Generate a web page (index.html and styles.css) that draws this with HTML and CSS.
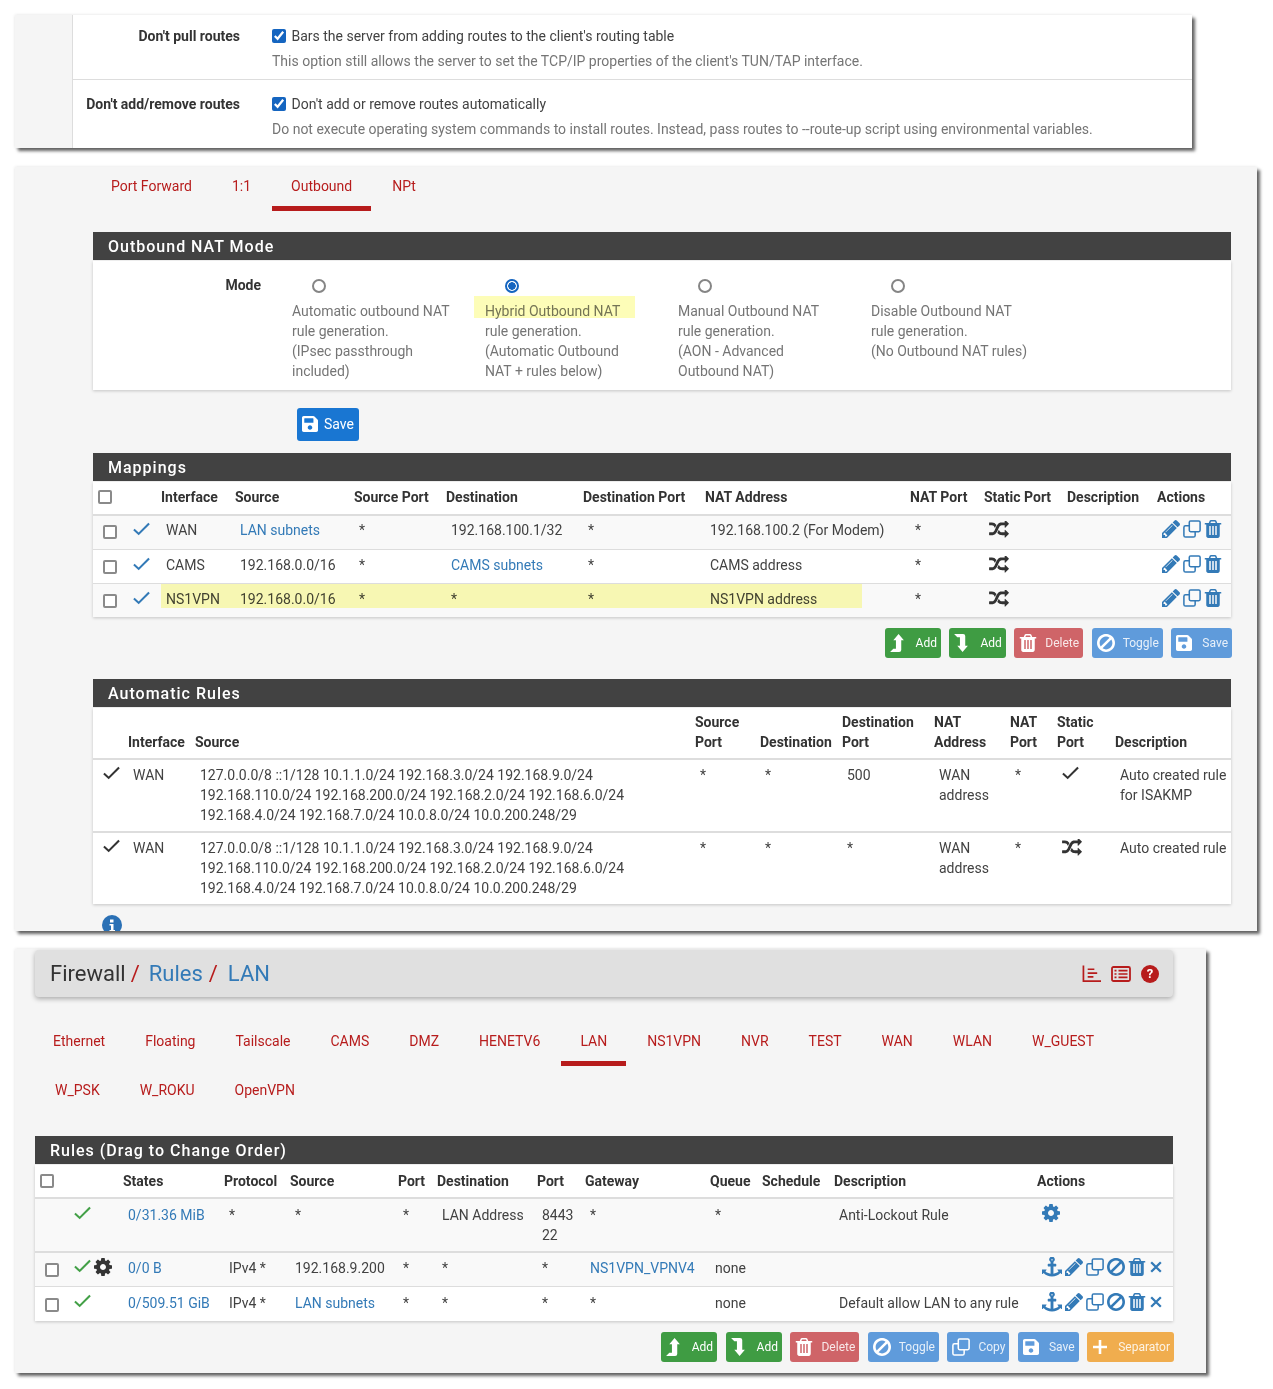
FILE: index.html

```html
<!DOCTYPE html>
<html lang="en">
<head>
    <meta charset="UTF-8">
    <title>pfSense settings</title>
    <link rel="stylesheet" href="styles.css">
</head>
<body>

<!-- Icon sprite -->
<svg class="sprite" xmlns="http://www.w3.org/2000/svg">
    <symbol id="i-random" viewBox="0 128 1792 1536"><path d="M666 481q-60 92-137 273-22-45-37-72.5t-40.5-63.5-51-56.5-63-35-81.5-14.5h-224q-14 0-23-9t-9-23v-192q0-14 9-23t23-9h224q250 0 410 225zm1126 799q0 14-9 23l-320 320q-9 9-23 9-13 0-22.5-9.5t-9.5-22.5v-192q-32 0-85 .5t-81 1-73-1-71-5-64-10.5-63-18.5-58-28.5-59-40-55-53.5-56-69.5q59-93 136-273 22 45 37 72.5t40.5 63.5 51 56.5 63 35 81.5 14.5h256v-192q0-14 9-23t23-9q12 0 24 10l319 319q9 9 9 23zm0-896q0 14-9 23l-320 320q-9 9-23 9-13 0-22.5-9.5t-9.5-22.5v-192h-256q-48 0-87 15t-69 45-51 61.5-45 77.5q-32 62-78 171-29 66-49.5 111t-54 105-64 100-74 83-90 68.5-106.5 42-128 16.5h-224q-14 0-23-9t-9-23v-192q0-14 9-23t23-9h224q48 0 87-15t69-45 51-61.5 45-77.5q32-62 78-171 29-66 49.5-111t54-105 64-100 74-83 90-68.5 106.5-42 128-16.5h256v-192q0-14 9-23t23-9q12 0 24 10l319 319q9 9 9 23z"/></symbol>
    <symbol id="i-pencil" viewBox="128 149 1515 1515"><path d="M491 1536l91-91-235-235-91 91v107h128v128h107zm523-928q0-22-22-22-10 0-17 7l-542 542q-7 7-7 17 0 22 22 22 10 0 17-7l542-542q7-7 7-17zm-54-192l416 416-832 832h-416v-416zm683 96q0 53-37 90l-166 166-416-416 166-165q36-38 90-38 53 0 91 38l235 234q37 39 37 91z"/></symbol>
    <symbol id="i-clone" viewBox="0 0 20 20"><rect x="7" y="1" width="12" height="12" rx="1.5" fill="none" stroke="currentColor" stroke-width="1.7"/><path d="M7 6.5H2.8A1.8 1.8 0 0 0 1 8.3v8.9A1.8 1.8 0 0 0 2.8 19h8.9a1.8 1.8 0 0 0 1.8-1.8V13" fill="none" stroke="currentColor" stroke-width="1.7"/></symbol>
    <symbol id="i-trash" viewBox="192 128 1408 1536"><path d="M704 1376v-704q0-14-9-23t-23-9h-64q-14 0-23 9t-9 23v704q0 14 9 23t23 9h64q14 0 23-9t9-23zm256 0v-704q0-14-9-23t-23-9h-64q-14 0-23 9t-9 23v704q0 14 9 23t23 9h64q14 0 23-9t9-23zm256 0v-704q0-14-9-23t-23-9h-64q-14 0-23 9t-9 23v704q0 14 9 23t23 9h64q14 0 23-9t9-23zm-544-992h448l-48-117q-7-9-17-11h-317q-10 2-17 11zm928 32v64q0 14-9 23t-23 9h-96v948q0 83-47 143.5t-113 60.5h-832q-66 0-113-58.5t-47-141.5v-952h-96q-14 0-23-9t-9-23v-64q0-14 9-23t23-9h309l70-167q15-37 54-63t79-26h320q40 0 79 26t54 63l70 167h309q14 0 23 9t9 23z"/></symbol>
    <symbol id="i-ban" viewBox="128 128 1536 1536"><path d="M1440 893q0-161-87-295l-754 753q137 89 297 89 111 0 211.5-43.5t173.5-116.5 116-174.5 43-212.5zm-999 299l755-754q-135-91-300-91-148 0-273 73t-198 199-73 274q0 162 89 299zm1223-299q0 157-61 300t-163.5 246-245 164-298.5 61-298.5-61-245-164-163.5-246-61-300 61-299.5 163.5-245.5 245-164 298.5-61 298.5 61 245 164 163.5 245.5 61 299.5z"/></symbol>
    <symbol id="i-times" viewBox="0 0 16 16"><path d="M2.5 2.5l11 11M13.5 2.5l-11 11" fill="none" stroke="currentColor" stroke-width="2.6"/></symbol>
    <symbol id="i-cog" viewBox="128 128 1536 1536"><path d="M1152 896q0-106-75-181t-181-75-181 75-75 181 75 181 181 75 181-75 75-181zm512-109v222q0 12-8 23t-20 13l-185 28q-19 54-39 91 35 50 107 138 10 12 10 25t-9 23q-27 37-99 108t-94 71q-12 0-26-9l-138-108q-44 23-91 38-16 136-29 186-7 28-36 28h-222q-14 0-24.5-8.5t-11.5-21.5l-28-184q-49-16-90-37l-141 107q-10 9-25 9-14 0-25-11-126-114-165-168-7-10-7-23 0-12 8-23 15-21 51-66.5t54-70.5q-27-50-41-99l-183-27q-13-2-21-12.5t-8-23.5v-222q0-12 8-23t19-13l186-28q14-46 39-92-40-57-107-138-10-12-10-24 0-10 9-23 26-36 98.5-107.5t94.5-71.5q13 0 26 10l138 107q44-23 91-38 16-136 29-186 7-28 36-28h222q14 0 24.5 8.5t11.5 21.5l28 184q49 16 90 37l142-107q9-9 24-9 13 0 25 10 129 119 165 170 7 8 7 22 0 12-8 23-15 21-51 66.5t-54 70.5q26 50 41 98l183 28q13 2 21 12.5t8 23.5z"/></symbol>
    <symbol id="i-anchor" viewBox="0 0 1792 1792"><path d="M960 256q0-26-19-45t-45-19-45 19-19 45 19 45 45 19 45-19 19-45zm832 888v352q0 22-20 30-8 2-12 2-12 0-23-9l-93-93q-119 143-318.5 226.5t-429.5 83.5-429.5-83.5-318.5-226.5l-93 93q-9 9-23 9-4 0-12-2-20-8-20-30v-352q0-14 9-23t23-9h352q22 0 30 20 8 19-7 35l-100 100q67 91 189.5 153.5t271.5 82.5v-647h-192q-26 0-45-19t-19-45v-128q0-26 19-45t45-19h192v-163q-58-34-93-92.5t-35-128.5q0-106 75-181t181-75 181 75 75 181q0 70-35 128.5t-93 92.5v163h192q26 0 45 19t19 45v128q0 26-19 45t-45 19h-192v647q149-20 271.5-82.5t189.5-153.5l-100-100q-15-16-7-35 8-20 30-20h352q14 0 23 9t9 23z"/></symbol>
    <symbol id="i-save" viewBox="0 32 448 448"><path d="M433.941 129.941l-83.882-83.882A48 48 0 0 0 316.118 32H48C21.49 32 0 53.49 0 80v352c0 26.51 21.49 48 48 48h352c26.51 0 48-21.49 48-48V163.882a48 48 0 0 0-14.059-33.941zM224 416c-35.346 0-64-28.654-64-64 0-35.346 28.654-64 64-64s64 28.654 64 64c0 35.346-28.654 64-64 64zm96-304.52V212c0 6.627-5.373 12-12 12H76c-6.627 0-12-5.373-12-12V108c0-6.627 5.373-12 12-12h228.52c3.183 0 6.235 1.264 8.485 3.515l3.48 3.48A11.996 11.996 0 0 1 320 111.48z"/></symbol>
    <symbol id="i-up" viewBox="0 0 13 17"><path d="M8 0l5 6h-2.500v9a2 2 0 0 1-2 2H0l3-3h2.500V6H3z"/></symbol>
    <symbol id="i-down" viewBox="0 0 13 17"><path d="M0 0h8.500a2 2 0 0 1 2 2v9H13l-5 6-5-6h2.500V3H3z"/></symbol>
    <symbol id="i-plus" viewBox="0 0 16 16"><path d="M8 1v14M1 8h14" fill="none" stroke="currentColor" stroke-width="2.6"/></symbol>
    <symbol id="i-check" viewBox="0 0 18 14"><path d="M1 7.5L6 12.2 17 1.2" fill="none" stroke="currentColor" stroke-width="2.2"/></symbol>
    <symbol id="i-chart" viewBox="0 0 20 18"><path d="M1.500 0v16.500H20M6 4h7M6 8h10M6 12h6" fill="none" stroke="currentColor" stroke-width="1.8"/></symbol>
    <symbol id="i-list" viewBox="0 0 20 16"><rect x="1" y="1" width="18" height="14" rx="1.5" fill="none" stroke="currentColor" stroke-width="1.8"/><path d="M3.500 4.700h2M7.500 4.700h9M3.500 8h2M7.500 8h9M3.500 11.300h2M7.500 11.300h9" fill="none" stroke="currentColor" stroke-width="1.7"/></symbol>
    <symbol id="i-info" viewBox="0 0 20 20"><circle cx="10" cy="10" r="10"/><path d="M8 4.500h3.500v3H8zM7.500 9h4v6H13v1.500H7.500V15H9v-4.500H7.500z" fill="#ffffff"/></symbol>
</svg>

<div class="page">

    <!-- OpenVPN options -->
    <section class="shot shot-options">
        <div class="form-row">
            <div class="form-label">Don't pull routes</div>
            <div class="form-value">
                <label class="check-line"><input type="checkbox" checked> Bars the server from adding routes to the client's routing table</label>
                <div class="hint">This option still allows the server to set the TCP/IP properties of the client's TUN/TAP interface.</div>
            </div>
        </div>
        <div class="form-row form-row-last">
            <div class="form-label">Don't add/remove routes</div>
            <div class="form-value">
                <label class="check-line"><input type="checkbox" checked> Don't add or remove routes automatically</label>
                <div class="hint">Do not execute operating system commands to install routes. Instead, pass routes to --route-up script using environmental variables.</div>
            </div>
        </div>
    </section>

    <!-- Outbound NAT -->
    <section class="shot shot-nat">
        <nav class="tabs tabs-nat">
            <a class="tab">Port Forward</a>
            <a class="tab">1:1</a>
            <a class="tab active">Outbound</a>
            <a class="tab">NPt</a>
        </nav>

        <h2 class="panel-title title-mode">Outbound NAT Mode</h2>
        <div class="panel-body mode-body">
            <div class="mode-label">Mode</div>
            <div class="mode-opt">
                <input type="radio" name="mode">
                <p>Automatic outbound NAT<br>rule generation.<br>(IPsec passthrough<br>included)</p>
            </div>
            <div class="mode-opt">
                <span class="marker marker-hybrid"></span>
                <input type="radio" name="mode" checked>
                <p>Hybrid Outbound NAT<br>rule generation.<br>(Automatic Outbound<br>NAT + rules below)</p>
            </div>
            <div class="mode-opt">
                <input type="radio" name="mode">
                <p>Manual Outbound NAT<br>rule generation.<br>(AON - Advanced<br>Outbound NAT)</p>
            </div>
            <div class="mode-opt">
                <input type="radio" name="mode">
                <p>Disable Outbound NAT<br>rule generation.<br>(No Outbound NAT rules)</p>
            </div>
        </div>
        <button class="btn-save"><svg class="ico"><use href="#i-save"/></svg>Save</button>

        <h2 class="panel-title">Mappings</h2>
        <div class="panel-body table-wrap">
            <span class="marker marker-row"></span>
            <table class="grid striped map-table">
                <colgroup><col><col><col><col><col><col><col><col><col><col><col><col></colgroup>
                <thead>
                    <tr>
                        <th><input type="checkbox"></th><th></th><th>Interface</th><th>Source</th><th>Source Port</th><th>Destination</th><th>Destination Port</th><th>NAT Address</th><th>NAT Port</th><th>Static Port</th><th>Description</th><th>Actions</th>
                    </tr>
                </thead>
                <tbody>
                    <tr>
                        <td><input type="checkbox"></td>
                        <td class="tick"><svg class="ico-check blue"><use href="#i-check"/></svg></td>
                        <td>WAN</td><td><a class="link">LAN subnets</a></td><td>*</td><td>192.168.100.1/32</td><td>*</td><td>192.168.100.2 (For Modem)</td><td>*</td>
                        <td><svg class="ico-random"><use href="#i-random"/></svg></td><td></td>
                        <td><div class="actions"><svg><use href="#i-pencil"/></svg><svg><use href="#i-clone"/></svg><svg><use href="#i-trash"/></svg></div></td>
                    </tr>
                    <tr>
                        <td><input type="checkbox"></td>
                        <td class="tick"><svg class="ico-check blue"><use href="#i-check"/></svg></td>
                        <td>CAMS</td><td>192.168.0.0/16</td><td>*</td><td><a class="link">CAMS subnets</a></td><td>*</td><td>CAMS address</td><td>*</td>
                        <td><svg class="ico-random"><use href="#i-random"/></svg></td><td></td>
                        <td><div class="actions"><svg><use href="#i-pencil"/></svg><svg><use href="#i-clone"/></svg><svg><use href="#i-trash"/></svg></div></td>
                    </tr>
                    <tr>
                        <td><input type="checkbox"></td>
                        <td class="tick"><svg class="ico-check blue"><use href="#i-check"/></svg></td>
                        <td>NS1VPN</td><td>192.168.0.0/16</td><td>*</td><td>*</td><td>*</td><td>NS1VPN address</td><td>*</td>
                        <td><svg class="ico-random"><use href="#i-random"/></svg></td><td></td>
                        <td><div class="actions"><svg><use href="#i-pencil"/></svg><svg><use href="#i-clone"/></svg><svg><use href="#i-trash"/></svg></div></td>
                    </tr>
                </tbody>
            </table>
        </div>
        <div class="btn-row">
            <button class="btn green"><span class="btn-ico"><svg class="arrow"><use href="#i-up"/></svg></span>Add</button>
            <button class="btn green"><span class="btn-ico"><svg class="arrow"><use href="#i-down"/></svg></span>Add</button>
            <button class="btn red"><span class="btn-ico"><svg><use href="#i-trash"/></svg></span>Delete</button>
            <button class="btn blue-btn"><span class="btn-ico"><svg><use href="#i-ban"/></svg></span>Toggle</button>
            <button class="btn blue-btn"><span class="btn-ico"><svg class="floppy"><use href="#i-save"/></svg></span>Save</button>
        </div>

        <h2 class="panel-title title-auto">Automatic Rules</h2>
        <div class="panel-body">
            <table class="grid auto-table">
                <colgroup><col><col><col><col><col><col><col><col><col><col></colgroup>
                <thead>
                    <tr>
                        <th></th><th>Interface</th><th>Source</th><th>Source<br>Port</th><th>Destination</th><th>Destination<br>Port</th><th>NAT<br>Address</th><th>NAT<br>Port</th><th>Static<br>Port</th><th>Description</th>
                    </tr>
                </thead>
                <tbody>
                    <tr>
                        <td><svg class="ico-check dark"><use href="#i-check"/></svg></td>
                        <td>WAN</td>
                        <td>127.0.0.0/8 ::1/128 10.1.1.0/24 192.168.3.0/24 192.168.9.0/24<br>192.168.110.0/24 192.168.200.0/24 192.168.2.0/24 192.168.6.0/24<br>192.168.4.0/24 192.168.7.0/24 10.0.8.0/24 10.0.200.248/29</td>
                        <td>*</td><td>*</td><td>500</td><td>WAN<br>address</td><td>*</td>
                        <td><svg class="ico-check dark"><use href="#i-check"/></svg></td>
                        <td>Auto created rule<br>for ISAKMP</td>
                    </tr>
                    <tr>
                        <td><svg class="ico-check dark"><use href="#i-check"/></svg></td>
                        <td>WAN</td>
                        <td>127.0.0.0/8 ::1/128 10.1.1.0/24 192.168.3.0/24 192.168.9.0/24<br>192.168.110.0/24 192.168.200.0/24 192.168.2.0/24 192.168.6.0/24<br>192.168.4.0/24 192.168.7.0/24 10.0.8.0/24 10.0.200.248/29</td>
                        <td>*</td><td>*</td><td>*</td><td>WAN<br>address</td><td>*</td>
                        <td><svg class="ico-random"><use href="#i-random"/></svg></td>
                        <td>Auto created rule</td>
                    </tr>
                </tbody>
            </table>
        </div>
        <svg class="info-dot"><use href="#i-info"/></svg>
    </section>

    <!-- Firewall rules -->
    <section class="shot shot-rules">
        <header class="crumb-bar">
            <div class="crumbs">Firewall<span class="slash">/</span><a class="link">Rules</a><span class="slash slash-last">/</span><a class="link">LAN</a></div>
            <div class="crumb-icons">
                <svg class="ico-chart"><use href="#i-chart"/></svg>
                <svg class="ico-list"><use href="#i-list"/></svg>
                <span class="help">?</span>
            </div>
        </header>

        <nav class="tabs tabs-rules">
            <a class="tab">Ethernet</a>
            <a class="tab">Floating</a>
            <a class="tab">Tailscale</a>
            <a class="tab">CAMS</a>
            <a class="tab">DMZ</a>
            <a class="tab">HENETV6</a>
            <a class="tab active">LAN</a>
            <a class="tab">NS1VPN</a>
            <a class="tab">NVR</a>
            <a class="tab">TEST</a>
            <a class="tab">WAN</a>
            <a class="tab">WLAN</a>
            <a class="tab">W_GUEST</a>
        </nav>
        <nav class="tabs tabs-rules tabs-second">
            <a class="tab">W_PSK</a>
            <a class="tab">W_ROKU</a>
            <a class="tab">OpenVPN</a>
        </nav>

        <h2 class="panel-title title-rules">Rules (Drag to Change Order)</h2>
        <div class="panel-body">
            <table class="grid rules-table">
                <colgroup><col><col><col><col><col><col><col><col><col><col><col><col><col></colgroup>
                <thead>
                    <tr>
                        <th><input type="checkbox"></th><th></th><th>States</th><th>Protocol</th><th>Source</th><th>Port</th><th>Destination</th><th>Port</th><th>Gateway</th><th>Queue</th><th>Schedule</th><th>Description</th><th>Actions</th>
                    </tr>
                </thead>
                <tbody>
                    <tr class="lockout">
                        <td></td>
                        <td class="status"><div class="status-icons"><svg class="ico-check green-ico"><use href="#i-check"/></svg></div></td>
                        <td><a class="link">0/31.36 MiB</a></td><td>*</td><td>*</td><td>*</td><td>LAN Address</td><td>8443<br>22</td><td>*</td><td>*</td><td></td><td>Anti-Lockout Rule</td>
                        <td><div class="actions"><svg class="cog"><use href="#i-cog"/></svg></div></td>
                    </tr>
                    <tr class="shade">
                        <td><input type="checkbox"></td>
                        <td class="status"><div class="status-icons"><svg class="ico-check green-ico"><use href="#i-check"/></svg><svg class="ico-cog"><use href="#i-cog"/></svg></div></td>
                        <td><a class="link">0/0 B</a></td><td>IPv4 *</td><td>192.168.9.200</td><td>*</td><td>*</td><td>*</td><td><a class="link">NS1VPN_VPNV4</a></td><td>none</td><td></td><td></td>
                        <td><div class="actions wide"><svg class="anchor"><use href="#i-anchor"/></svg><svg><use href="#i-pencil"/></svg><svg><use href="#i-clone"/></svg><svg><use href="#i-ban"/></svg><svg><use href="#i-trash"/></svg><svg class="times"><use href="#i-times"/></svg></div></td>
                    </tr>
                    <tr>
                        <td><input type="checkbox"></td>
                        <td class="status"><div class="status-icons"><svg class="ico-check green-ico"><use href="#i-check"/></svg></div></td>
                        <td><a class="link">0/509.51 GiB</a></td><td>IPv4 *</td><td><a class="link">LAN subnets</a></td><td>*</td><td>*</td><td>*</td><td>*</td><td>none</td><td></td><td>Default allow LAN to any rule</td>
                        <td><div class="actions wide"><svg class="anchor"><use href="#i-anchor"/></svg><svg><use href="#i-pencil"/></svg><svg><use href="#i-clone"/></svg><svg><use href="#i-ban"/></svg><svg><use href="#i-trash"/></svg><svg class="times"><use href="#i-times"/></svg></div></td>
                    </tr>
                </tbody>
            </table>
        </div>
        <div class="btn-row">
            <button class="btn green"><span class="btn-ico"><svg class="arrow"><use href="#i-up"/></svg></span>Add</button>
            <button class="btn green"><span class="btn-ico"><svg class="arrow"><use href="#i-down"/></svg></span>Add</button>
            <button class="btn red"><span class="btn-ico"><svg><use href="#i-trash"/></svg></span>Delete</button>
            <button class="btn blue-btn"><span class="btn-ico"><svg><use href="#i-ban"/></svg></span>Toggle</button>
            <button class="btn blue-btn"><span class="btn-ico"><svg><use href="#i-clone"/></svg></span>Copy</button>
            <button class="btn blue-btn"><span class="btn-ico"><svg class="floppy"><use href="#i-save"/></svg></span>Save</button>
            <button class="btn orange"><span class="btn-ico"><svg class="plus"><use href="#i-plus"/></svg></span>Separator</button>
        </div>
    </section>

</div>

</body>
</html>
```

FILE: styles.css

```css
* {
    box-sizing: border-box;
}
body {
    margin: 0;
    background-color: #ffffff;
    font-family: Roboto, "Liberation Sans", sans-serif;
    font-size: 14px;
    line-height: 20px;
    color: #424242;
}
svg {
    fill: currentColor;
}
.sprite {
    display: none;
}
.page {
    padding: 15px 0 16px 15px;
}
.link {
    color: #337ab7;
}

/* Screenshot panels */
.shot {
    background-color: #f5f5f5;
    box-shadow: 3px 3px 3px rgba(0, 0, 0, 0.6), 0 0 3px rgba(0, 0, 0, 0.12);
}
.shot-options {
    width: 1177px;
    height: 133px;
    padding-left: 57px;
}
.shot-nat {
    width: 1242px;
    height: 764px;
    margin-top: 19px;
    padding: 0 26px 0 78px;
    overflow: hidden;
}
.shot-rules {
    width: 1191px;
    height: 424px;
    margin-top: 18px;
    padding: 1px 33px 0 20px;
}

/* Options form */
.form-row {
    display: flex;
    height: 65px;
    background-color: #ffffff;
    border-left: 1px solid #dddddd;
    border-bottom: 1px solid #dddddd;
    padding-top: 11px;
}
.form-row-last {
    height: 68px;
    border-bottom: none;
    padding-top: 14px;
}
.form-label {
    width: 167px;
    text-align: right;
    font-weight: 700;
    color: #333333;
}
.form-value {
    margin-left: 32px;
}
.check-line {
    display: block;
}
.check-line input {
    width: 14px;
    height: 14px;
    margin: 0 2px 0 0;
    vertical-align: -2px;
    accent-color: #1565c0;
}
.hint {
    margin-top: 5px;
    color: #757575;
}

/* Tabs */
.tabs {
    display: flex;
}
.tab {
    height: 44px;
    padding: 9px 20px 0;
    color: #b71c1c;
}
.tab.active {
    margin: 0 1px;
    padding: 9px 19px 0;
    border-bottom: 5px solid #b71c1c;
}
.tabs-nat {
    margin: 0 0 21px -2px;
}
.tabs-rules {
    margin: 25px 0 0 -2px;
}
.tabs-second {
    margin: 5px 0 0 0;
}

/* Panels */
.panel-title {
    height: 28px;
    margin: 0 0 1px;
    padding: 1px 15px 0;
    background-color: #424242;
    color: #ffffff;
    font-size: 16px;
    font-weight: 500;
    line-height: 27px;
    letter-spacing: 1px;
}
.panel-body {
    background-color: #ffffff;
    box-shadow: 0 1px 3px rgba(0, 0, 0, 0.2);
}
.title-auto {
    margin-top: 21px;
}
.title-rules {
    margin-top: 21px;
}

/* Outbound NAT mode */
.mode-body {
    display: flex;
    height: 129px;
    padding-top: 14px;
}
.mode-label {
    width: 168px;
    text-align: right;
    font-weight: 700;
    color: #333333;
    margin-right: 31px;
}
.mode-opt {
    position: relative;
    width: 193px;
}
.mode-opt input {
    appearance: none;
    display: block;
    width: 14px;
    height: 14px;
    margin: 4px 0 0 20px;
    border: 2px solid #858585;
    border-radius: 50%;
}
.mode-opt input:checked {
    border-color: #1565c0;
    background: radial-gradient(circle, #1565c0 3.5px, #ffffff 4px);
}
.mode-opt p {
    margin: 8px 0 0;
    color: #757575;
}
.marker {
    position: absolute;
    background-color: #fdfdb8;
    mix-blend-mode: multiply;
}
.marker-hybrid {
    left: -11px;
    top: 21px;
    width: 161px;
    height: 22px;
}
.marker-row {
    left: 68px;
    top: 102px;
    width: 701px;
    height: 24px;
}
.btn-save {
    display: flex;
    align-items: center;
    height: 33px;
    margin: 18px 0 12px 204px;
    padding: 0 5px 2px;
    border: none;
    border-radius: 3px;
    background-color: #1976d2;
    color: #ffffff;
    font: 14px Roboto, sans-serif;
}
.btn-save .ico {
    width: 16px;
    height: 16px;
    margin-right: 6px;
}

/* Tables */
.table-wrap {
    position: relative;
}
.grid {
    width: 100%;
    table-layout: fixed;
    border-collapse: collapse;
}
.grid th {
    padding: 5px 0 7px 5px;
    border-bottom: 2px solid #dddddd;
    text-align: left;
    vertical-align: bottom;
    font-weight: 700;
    color: #333333;
    white-space: nowrap;
}
.grid th:first-child {
    vertical-align: middle;
}
.grid td {
    padding: 5px 0 8px 10px;
    border-top: 1px solid #dddddd;
    vertical-align: top;
    white-space: nowrap;
}
.grid tbody tr:first-child td {
    border-top: none;
}
.map-table tbody tr:first-child td {
    padding-top: 4px;
    padding-bottom: 9px;
}
.grid input {
    appearance: none;
    display: block;
    width: 14px;
    height: 14px;
    margin: 0;
    border: 2px solid #8a8a8a;
    border-radius: 2px;
    background-color: #ffffff;
}
.grid td input {
    margin-top: 5px;
}
.striped tbody tr:nth-child(odd),
.rules-table .lockout,
.rules-table .shade {
    background-color: #f9f9f9;
}
.map-table col:nth-child(1) { width: 35px; }
.map-table col:nth-child(2) { width: 28px; }
.map-table col:nth-child(3) { width: 74px; }
.map-table col:nth-child(4) { width: 119px; }
.map-table col:nth-child(5) { width: 92px; }
.map-table col:nth-child(6) { width: 137px; }
.map-table col:nth-child(7) { width: 122px; }
.map-table col:nth-child(8) { width: 205px; }
.map-table col:nth-child(9) { width: 74px; }
.map-table col:nth-child(10) { width: 83px; }
.map-table col:nth-child(11) { width: 90px; }
.map-table col:nth-child(12) { width: 79px; }

.auto-table col:nth-child(1) { width: 30px; }
.auto-table col:nth-child(2) { width: 67px; }
.auto-table col:nth-child(3) { width: 500px; }
.auto-table col:nth-child(4) { width: 65px; }
.auto-table col:nth-child(5) { width: 82px; }
.auto-table col:nth-child(6) { width: 92px; }
.auto-table col:nth-child(7) { width: 76px; }
.auto-table col:nth-child(8) { width: 47px; }
.auto-table col:nth-child(9) { width: 58px; }
.auto-table col:nth-child(10) { width: 121px; }
.auto-table th {
    padding: 4px 0 6px 5px;
}
.auto-table td {
    padding: 5px 0 6px 10px;
    border-top: 2px solid #dddddd;
}

.rules-table col:nth-child(1) { width: 33px; }
.rules-table col:nth-child(2) { width: 50px; }
.rules-table col:nth-child(3) { width: 101px; }
.rules-table col:nth-child(4) { width: 66px; }
.rules-table col:nth-child(5) { width: 108px; }
.rules-table col:nth-child(6) { width: 39px; }
.rules-table col:nth-child(7) { width: 100px; }
.rules-table col:nth-child(8) { width: 48px; }
.rules-table col:nth-child(9) { width: 125px; }
.rules-table col:nth-child(10) { width: 52px; }
.rules-table col:nth-child(11) { width: 72px; }
.rules-table col:nth-child(12) { width: 203px; }
.rules-table col:nth-child(13) { width: 141px; }
.rules-table th {
    padding: 6px 0 6px 5px;
}
.rules-table .lockout td {
    height: 52px;
    padding-top: 6px;
    padding-bottom: 6px;
    border-bottom: 2px solid #dddddd;
}
.rules-table tbody tr:last-child td {
    padding-top: 6px;
}

/* Table icons */
.ico-check {
    display: block;
    width: 17px;
    height: 14px;
    margin-top: 1px;
}
.tick .ico-check {
    margin-top: 2px;
}
.blue {
    color: #337ab7;
}
.dark {
    color: #333333;
}
.green-ico {
    color: #43a047;
}
.grid td.tick {
    padding-left: 5px;
}
.ico-random {
    display: block;
    width: 20px;
    height: 17px;
    margin-top: 1px;
    color: #333333;
}
.grid td.status {
    padding-left: 6px;
}
.status-icons {
    display: flex;
    gap: 3px;
}
.ico-cog {
    width: 18px;
    height: 18px;
    color: #333333;
}
.actions {
    display: flex;
    gap: 3px;
    color: #337ab7;
}
.actions svg {
    width: 18px;
    height: 18px;
}
.actions .anchor {
    width: 20px;
    height: 20px;
    margin-top: -1px;
}
.actions .times {
    width: 14px;
    height: 14px;
    margin-top: 2px;
}
.actions .cog {
    margin-top: -1px;
}

/* Buttons */
.btn-row {
    display: flex;
    justify-content: flex-end;
    gap: 8.5px;
    margin: 11px -1px 0 0;
}
.btn {
    display: flex;
    align-items: center;
    height: 30px;
    padding: 0 4px 0 5px;
    border: none;
    border-radius: 3px;
    color: rgba(255, 255, 255, 0.85);
    font: 12px Roboto, sans-serif;
}
.btn-ico {
    display: flex;
    align-items: center;
    width: 20px;
    margin-right: 6px;
    color: #ffffff;
}
.btn-ico svg {
    width: 18px;
    height: 18px;
}
.btn-ico .arrow {
    width: 14px;
    height: 18px;
}
.btn-ico .floppy {
    width: 16px;
    height: 16px;
}
.btn-ico .plus {
    width: 16px;
    height: 16px;
}
.green {
    background-color: #3f9c43;
    color: #ffffff;
}
.red {
    background-color: #cf6468;
}
.blue-btn {
    background-color: #5f9bdb;
}
.orange {
    background-color: #f0ad4e;
}
.info-dot {
    display: block;
    width: 20px;
    height: 20px;
    margin: 11px 0 0 9px;
    color: #2a70b5;
}

/* Breadcrumb bar */
.crumb-bar {
    display: flex;
    justify-content: space-between;
    align-items: center;
    height: 47px;
    padding: 0 14px 0 15px;
    border-radius: 4px;
    background-color: #e0e0e0;
    box-shadow: 0 2px 5px rgba(0, 0, 0, 0.3);
}
.crumbs {
    color: #333333;
    font-size: 22px;
    line-height: 47px;
}
.slash {
    margin: 0 9px 0 5px;
    color: #b71c1c;
}
.slash-last {
    margin: 0 10px 0 6px;
}
.crumb-icons {
    display: flex;
    align-items: center;
    gap: 10px;
    color: #b71c1c;
}
.ico-chart {
    width: 19px;
    height: 18px;
}
.ico-list {
    width: 20px;
    height: 16px;
}
.help {
    width: 18px;
    height: 18px;
    border-radius: 50%;
    background-color: #b71c1c;
    color: #ffffff;
    text-align: center;
    font-size: 13px;
    font-weight: 700;
    line-height: 18px;
}
```
